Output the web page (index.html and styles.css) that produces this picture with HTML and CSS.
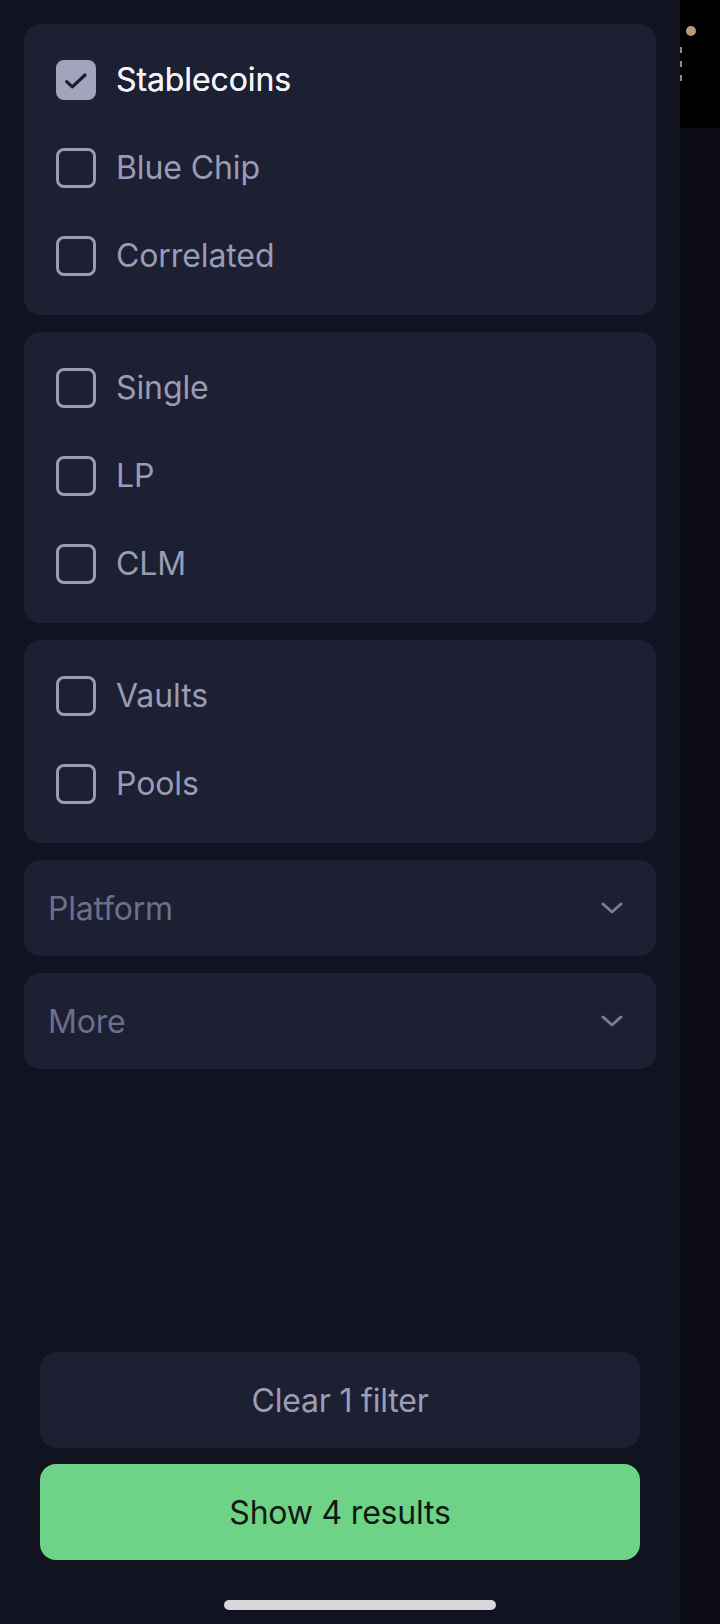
FILE: index.html
```html
<!DOCTYPE html>
<html lang="en">
<head>
<meta charset="utf-8">
<title>Filters</title>
<link rel="stylesheet" href="styles.css">
</head>
<body>
<div class="screen">
  <aside class="panel">
    <div class="filters">
      <section class="card">
        <label class="row checked">
          <span class="box">
            <svg viewBox="0 0 40 40" width="40" height="40"><path d="M10.7 21.7 L16.3 26.9 L29 15" fill="none" stroke="#1c1d30" stroke-width="3.2" stroke-linecap="round" stroke-linejoin="round"/></svg>
          </span>
          <span class="text">Stablecoins</span>
        </label>
        <label class="row"><span class="box"></span><span class="text">Blue Chip</span></label>
        <label class="row"><span class="box"></span><span class="text">Correlated</span></label>
      </section>
      <section class="card">
        <label class="row"><span class="box"></span><span class="text">Single</span></label>
        <label class="row"><span class="box"></span><span class="text">LP</span></label>
        <label class="row"><span class="box"></span><span class="text">CLM</span></label>
      </section>
      <section class="card">
        <label class="row"><span class="box"></span><span class="text">Vaults</span></label>
        <label class="row"><span class="box"></span><span class="text">Pools</span></label>
      </section>
      <div class="dropdown">
        <span class="dd-label">Platform</span>
        <svg class="chev" viewBox="0 0 22 12" width="22" height="12"><path d="M2 2 L11 10 L20 2" fill="none" stroke="#7b7d97" stroke-width="3" stroke-linecap="round" stroke-linejoin="round"/></svg>
      </div>
      <div class="dropdown">
        <span class="dd-label">More</span>
        <svg class="chev" viewBox="0 0 22 12" width="22" height="12"><path d="M2 2 L11 10 L20 2" fill="none" stroke="#7b7d97" stroke-width="3" stroke-linecap="round" stroke-linejoin="round"/></svg>
      </div>
    </div>
    <div class="footer">
      <button class="btn btn-clear">Clear 1 filter</button>
      <button class="btn btn-show">Show 4 results</button>
    </div>
  </aside>
  <div class="strip">
    <div class="strip-top">
      <span class="dot"></span>
      <span class="tick t1"></span>
      <span class="tick t2"></span>
      <span class="tick t3"></span>
    </div>
  </div>
  <div class="home-bar"></div>
</div>
</body>
</html>
```

FILE: styles.css
```css
html, body {
  margin: 0;
  padding: 0;
  background: #0a0b13;
}

body {
  font-family: Inter, "Noto Sans", "Liberation Sans", sans-serif;
}

.screen {
  position: relative;
  width: 720px;
  height: 1624px;
  display: flex;
  overflow: hidden;
}

.panel {
  width: 680px;
  height: 1624px;
  background: #121320;
  display: flex;
  flex-direction: column;
}

.filters {
  padding: 24px 24px 0 24px;
  display: flex;
  flex-direction: column;
  gap: 17px;
}

.card {
  background: #1d1f33;
  border-radius: 16px;
  padding: 36px 32px 39px 32px;
  display: flex;
  flex-direction: column;
  gap: 48px;
}

.row {
  display: flex;
  align-items: center;
  height: 40px;
  gap: 20px;
}

.box {
  width: 40px;
  height: 40px;
  box-sizing: border-box;
  border: 3px solid #9a9bb3;
  border-radius: 8px;
  flex: none;
  position: relative;
}

.row.checked .box {
  background: #a3a4bc;
  border-color: #a3a4bc;
}

.row.checked .box svg {
  position: absolute;
  left: -3px;
  top: -3px;
}

.text {
  font-size: 32px;
  line-height: 40px;
  color: #9a9bb4;
  letter-spacing: -0.1px;
}

.row.checked .text {
  color: #f4f4f8;
  font-weight: 400;
  text-shadow: 0 0 0.4px #f4f4f8;
}

.dropdown {
  background: #1d1f33;
  border-radius: 16px;
  height: 96px;
  padding: 0 33px 0 24px;
  display: flex;
  align-items: center;
  justify-content: space-between;
}

.dd-label {
  font-size: 32px;
  color: #6d6f8a;
  letter-spacing: -0.2px;
}

.chev {
  display: block;
}

.footer {
  margin-top: auto;
  padding: 0 40px 64px 40px;
  display: flex;
  flex-direction: column;
  gap: 16px;
}

.btn {
  height: 96px;
  border: none;
  border-radius: 16px;
  font-family: Inter, "Noto Sans", "Liberation Sans", sans-serif;
  font-size: 32px;
  letter-spacing: -0.2px;
  padding: 0;
}

.btn-clear {
  background: #1d1f33;
  color: #9c9db6;
}

.btn-show {
  background: #6fd387;
  color: #0f1a14;
}

.strip {
  width: 40px;
  height: 1624px;
  background: #0a0b13;
}

.strip-top {
  position: relative;
  height: 128px;
  background: #000000;
}

.dot {
  position: absolute;
  left: 6px;
  top: 26px;
  width: 10px;
  height: 10px;
  border-radius: 50%;
  background: #b89a78;
}

.tick {
  position: absolute;
  left: 0;
  width: 2px;
  height: 6px;
  background: #8a8a92;
}

.t1 { top: 47px; }
.t2 { top: 61px; }
.t3 { top: 75px; }

.home-bar {
  position: absolute;
  left: 224px;
  top: 1600px;
  width: 272px;
  height: 10px;
  border-radius: 5px;
  background: #d8d8dc;
}
```
